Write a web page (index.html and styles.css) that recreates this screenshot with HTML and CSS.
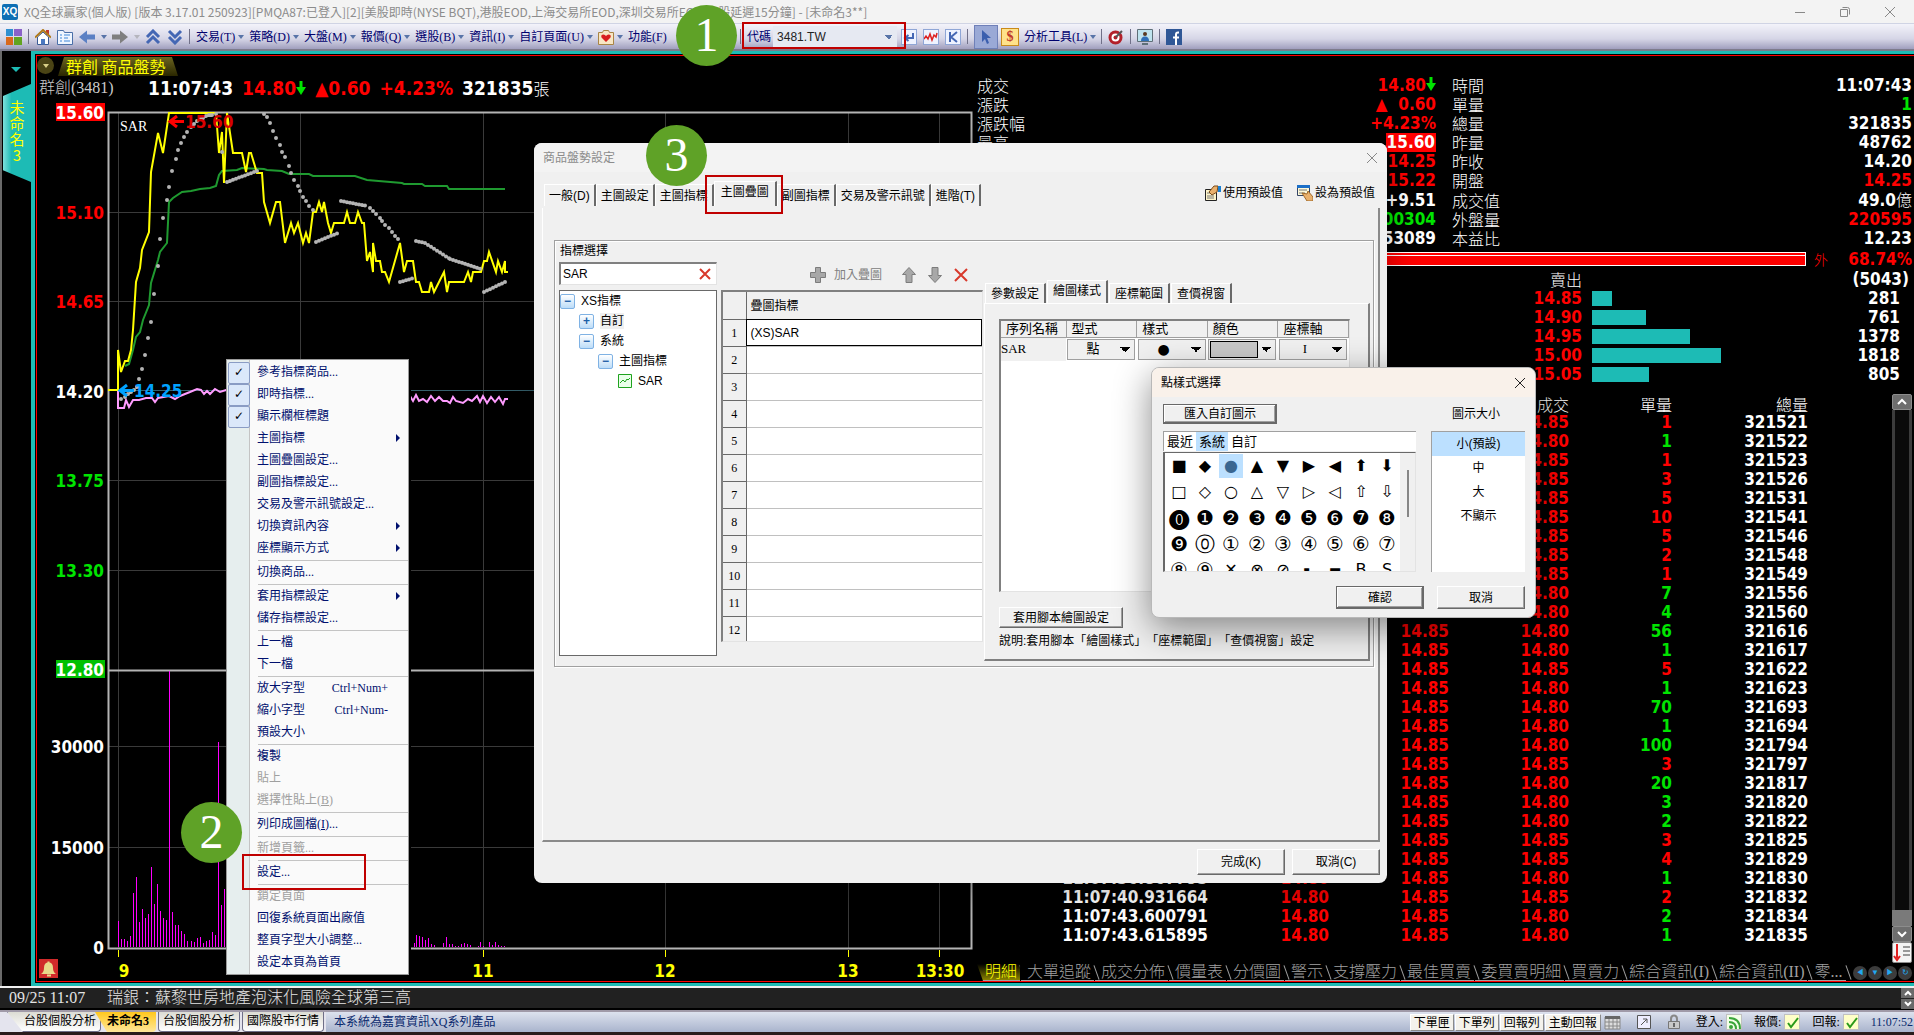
FILE: index.html
```
<!DOCTYPE html>
<html lang="zh-Hant">
<head>
    <meta charset="UTF-8">
    <meta name="viewport" content="width=device-width, initial-scale=1.0">
    <title>XQ全球贏家(個人版)</title>
    <link rel="stylesheet" href="styles.css">
</head>
<body>
<div class="app">

    <header class="titlebar">
        <span class="logo">XQ</span>
        <h1>XQ全球贏家(個人版) [版本 3.17.01 250923][PMQA87:已登入][2][美股即時(NYSE BQT),港股EOD,上海交易所EOD,深圳交易所EOD,日股延遲15分鐘] - [未命名3**]</h1>
        <div class="window-buttons">
            <button aria-label="最小化"><svg width="12" height="12"><path d="M1 6.500h10"/></svg></button>
            <button aria-label="還原"><svg width="12" height="12"><path d="M1.500 3.500h7v7h-7zM3.500 1.500h5q2 0 2 2v5"/></svg></button>
            <button aria-label="關閉"><svg width="12" height="12"><path d="M1 1l10 10M11 1L1 11"/></svg></button>
        </div>
    </header>

    <nav class="toolbar">
        <button class="tool" aria-label="版面"><svg width="16" height="16"><path fill="#2f8fd0" d="M0 0h7v7H0z"/><path fill="#8a62c8" d="M8 0h8v7H8z"/><path fill="#d9681d" d="M0 8h7v8H0z"/><path fill="#62a420" d="M8 8h8v8H8z"/></svg></button>
        <i class="sep"></i>
        <button class="tool" aria-label="首頁"><svg width="16" height="16"><path d="M11 1h3v5h-3z" fill="#c0392b"/><path d="M2.500 8L8 3l5.500 5v7.500h-11z" fill="#fff" stroke="#3a5a94"/><path d="M0 8.500L8 1l8 7.500" fill="none" stroke="#b07a1a" stroke-width="2"/><path d="M6 10h4v5.500H6z" fill="#4a78c0"/></svg></button>
        <button class="tool" aria-label="頁面"><svg width="16" height="16"><path d="M.5 1.500h6l1 2h8v12H.5z" fill="#eef5ff" stroke="#4a6fa8"/><path d="M3 6h2M3 9h2M3 12h2M7 6h6M7 9h4M7 12h6" stroke="#3f87d8"/></svg></button>
        <button class="tool" aria-label="上一頁"><svg width="16" height="16"><path d="M0 8l8-6.500v4h8v5H8v4z" fill="#5b80c4"/></svg></button>
        <i class="tri"></i>
        <button class="tool" aria-label="下一頁"><svg width="16" height="16"><path d="M16 8L8 1.500v4H0v5h8v4z" fill="#7f7f7f"/></svg></button>
        <i class="tri off"></i>
        <button class="tool" aria-label="往上"><svg width="16" height="16"><path d="M2 8l6-6 6 6M2 14l6-6 6 6" class="chev"/></svg></button>
        <button class="tool" aria-label="往下"><svg width="16" height="16"><path d="M2 2l6 6 6-6M2 8l6 6 6-6" class="chev"/></svg></button>
        <i class="sep"></i>
        <button class="menu">交易(T)<i class="tri"></i></button>
        <button class="menu">策略(D)<i class="tri"></i></button>
        <button class="menu">大盤(M)<i class="tri"></i></button>
        <button class="menu">報價(Q)<i class="tri"></i></button>
        <button class="menu">選股(B)<i class="tri"></i></button>
        <button class="menu">資訊(I)<i class="tri"></i></button>
        <button class="menu">自訂頁面(U)<i class="tri"></i></button>
        <button class="menu heart" aria-label="我的最愛"><svg width="16" height="16"><path d="M.5 3.500h4l1-2h5l1 2h4v12H.5z" fill="#f7e6c4" stroke="#a98545"/><path d="M8 13L3.500 8.500q-1-3 2-3Q7 5.500 8 7q1-1.500 2.500-1.500 3 0 2 3z" fill="#d81e1e"/></svg><i class="tri"></i></button>
        <button class="menu functions">功能(F)<i class="tri"></i></button>
        <i class="sep"></i>
        <label for="symbol">代碼</label>
        <select id="symbol"><option>3481.TW</option></select>
        <button class="tool boxed" aria-label="輸入"><svg width="16" height="16"><path d="M12 4v5H5M7.500 6L4 9l3.500 3" class="blue"/></svg></button>
        <button class="tool boxed" aria-label="走勢圖"><svg width="16" height="16"><path d="M1 10l2-3 2 3 2-5 2 6 2-5 2 2 1-4" fill="none" stroke="#d22" stroke-width="1.500"/></svg></button>
        <button class="tool boxed" aria-label="K線圖"><svg width="16" height="16"><path d="M5 3v10M12 3L6 8l6 5" class="blue"/></svg></button>
        <i class="sep"></i>
        <button class="tool pressed" aria-label="選取"><svg width="16" height="16"><path d="M4 1v12l3-3 2 5 2-1-2-5h4z" fill="#3b5fae"/></svg></button>
        <button class="tool dollar" aria-label="下單">$</button>
        <button class="menu">分析工具(L)<i class="tri"></i></button>
        <i class="sep"></i>
        <button class="tool" aria-label="目標"><svg width="16" height="16"><circle cx="7.500" cy="8.500" r="5.500" fill="#fff" stroke="#b3202a" stroke-width="3"/><circle cx="7.500" cy="8.500" r="2" fill="#b3202a"/><path d="M8 8l6-6" stroke="#555" stroke-width="2"/></svg></button>
        <i class="sep"></i>
        <button class="tool" aria-label="客服"><svg width="16" height="16"><path d="M.5.500h15v12H.5z" fill="#bfe3ee" stroke="#5f6f78"/><circle cx="8" cy="5" r="2" fill="#5b3a22"/><path d="M4 12q0-4.500 4-4.500t4 4.500z" fill="#2f6fb8"/><path d="M5 15h6" stroke="#5f6f78" stroke-width="2"/></svg></button>
        <i class="sep"></i>
        <button class="tool" aria-label="Facebook"><svg width="16" height="16"><path d="M0 0h16v16H0z" fill="#2f5796"/><path d="M13 3.500h-1q-2 0-2 2V16M7 8.500h6" fill="none" stroke="#fff" stroke-width="2"/></svg></button>
    </nav>

    <main class="workspace">
        <aside class="side">
            <i class="side-arrow"></i>
            <a class="side-tab" href="#">未命名3</a>
        </aside>

        <div class="frame">
        <section class="chart-panel">
            <div class="panel-tabs">
                <button class="round" aria-label="選單"><i class="tri gold"></i></button>
                <h2>群創 商品盤勢</h2>
            </div>
            <div class="summary">
                <span class="name">群創(3481)</span>
                <b>11:07:43</b>
                <b class="up last">14.80<svg width="10" height="14"><path d="M3.500 0h3v6H10L5 14 0 6h3.500z" fill="#00e400"/></svg></b>
                <b class="up">▲0.60</b>
                <b class="up">+4.23%</b>
                <b>321835<span class="cjk">張</span></b>
            </div>
            <svg class="chart" viewBox="37 100 937 881" preserveAspectRatio="xMinYMin meet">
                <path class="grid" d="M118.500 113V948M300.500 113V948M483.500 113V948M665.500 113V948M848.500 113V948M939.500 113V948M108 212.500H971M108 301.500H971M108 480.500H971M108 570.500H971M108 746.500H971M108 847.500H971"/>
                <path class="base" d="M108 390.500H971"/>
                <path class="outline" d="M108.500 112.500H971.500V948.500H108.500zM108 670.500H971"/>
                <path id="volume" class="volume"/>
                <path class="tick" d="M118.500 950v7M300.500 950v7M483.500 950v7M665.500 950v7M848.500 950v7M939.500 950v7"/>

                <polyline class="pink" points="118,390 118,408 124,408 126,400 129,407 133,400 139,400 146,398 152,398 155,402 158,398 169,396 175,399 180,396 190,392 197,389 201,390 204,394 207,391 210,394 215,389 220,392 226,390 300,395 408,400 410,396 413,401 416,395 419,401 423,399 427,402 431,396 435,401 439,397 443,401 447,401 450,403 453,397 456,401 463,403 468,399 472,401 477,396 480,402 483,396 487,403 491,397 495,402 499,397 503,404 505,399 508,399"/>
                <polyline class="average" points="125,366 129,364 133,350 136,337 140,332 143,320 149,305 151,283 158,260 160,252 167,243 169,202 173,198 182,192 191,191 200,189 210,188 216,186 219,175 222,171 237,170 242,168 264,169 267,170 282,171 289,174 309,174 313,176 355,176 367,180 402,183 404,184 422,184 425,186 447,186 449,189 505,189"/>
                <polyline class="price" points="108,390 118,390 118,350 121,372 125,361 128,361 131,350 133,330 136,282 140,268 142,250 149,232 151,172 158,133 163,153 169,113 216,113 219,153 222,132 224,183 227,113 233,153 242,153 246,172 249,153 251,153 257,173 262,173 264,202 270,223 276,202 280,202 285,243 291,223 294,233 298,223 303,243 306,233 309,243 313,212 316,212 319,202 322,212 324,202 328,223 331,233 334,223 344,223 347,212 350,223 355,223 358,212 362,223 364,223 367,261 370,252 373,272 373,243 376,261 380,261 382,272 385,272 389,282 400,243 404,272 407,261 413,261 416,282 419,282 422,292 429,292 431,282 434,292 444,272 447,292 449,282 464,282 468,272 471,282 473,272 481,272 484,261 487,261 489,252 496,272 498,261 502,272 505,261 505,272 508,272"/>
                <path id="sar" class="sar"/>

                <text class="indicator" x="120" y="131">SAR</text>
                <path class="arrow high" d="M184 121.500h-14M177 116l-7 5.500 7 5.500"/>
                <text class="high-text" x="185" y="128">15.60</text>
                <path class="arrow low" d="M134 390.500h-14M127 385l-7 5.500 7 5.500"/>
                <text class="low-text" x="134" y="397">14.25</text>

                <g class="axis">
                    <path d="M56 103h49v18H56z" fill="#f00"/>
                    <text x="104" y="119" class="w">15.60</text>
                    <text x="104" y="219" class="r">15.10</text>
                    <text x="104" y="308" class="r">14.65</text>
                    <text x="104" y="398" class="w">14.20</text>
                    <text x="104" y="487" class="g">13.75</text>
                    <text x="104" y="577" class="g">13.30</text>
                    <path d="M56 660h49v18H56z" fill="#00c000"/>
                    <text x="104" y="676" class="w">12.80</text>
                    <text x="104" y="753" class="w">30000</text>
                    <text x="104" y="854" class="w">15000</text>
                    <text x="104" y="954" class="w">0</text>
                </g>
                <g class="hours">
                    <text x="124" y="977">9</text>
                    <text x="300" y="977">10</text>
                    <text x="483" y="977">11</text>
                    <text x="665" y="977">12</text>
                    <text x="848" y="977">13</text>
                    <text x="940" y="977">13:30</text>
                </g>
                <path d="M39 959h19v19H39z" fill="#d02a2a"/>
                <path d="M41 974q3-2 3-6 0-5 3.500-5.500v-1h2v1q3.500.500 3.500 5.500 0 4 3 6zM47 974.500h4v2h-4z" fill="#e8d98a"/>
            </svg>
        </section>

        <section class="quote-panel">
            <table class="quote">
                <tr><th>成交</th><td class="up">14.80<svg width="10" height="14"><path d="M3.500 0h3v6H10L5 14 0 6h3.500z" fill="#00e400"/></svg></td><th>時間</th><td>11:07:43</td></tr>
                <tr><th>漲跌</th><td class="up">▲ &nbsp;0.60</td><th>單量</th><td class="down">1</td></tr>
                <tr><th>漲跌幅</th><td class="up">+4.23%</td><th>總量</th><td>321835</td></tr>
                <tr><th>最高</th><td><span class="limit">15.60</span></td><th>昨量</th><td>48762</td></tr>
                <tr><th>最低</th><td class="up">14.25</td><th>昨收</th><td>14.20</td></tr>
                <tr><th>均價</th><td class="up">15.22</td><th>開盤</th><td class="up">14.25</td></tr>
                <tr><th>溢折價</th><td>+9.51</td><th>成交值</th><td>49.0<span class="cjk">億</span></td></tr>
                <tr><th>內盤量</th><td class="down">100304</td><th>外盤量</th><td class="up">220595</td></tr>
                <tr><th>總筆數</th><td>53089</td><th>本益比</th><td>12.23</td></tr>
            </table>
            <div class="ratio"><div class="ratio-bar"></div><span class="cjk">外</span><b>68.74%</b></div>
            <table class="book">
                <tr><th>賣出</th><td></td><td class="total">(5043)</td></tr>
            </table>
            <div class="tape">
                <table class="ticks">
                    <colgroup><col class="c-time"><col class="c-bid"><col class="c-price"><col class="c-price"><col class="c-qty"><col class="c-total"><col></colgroup>
                    <thead><tr><th>時間</th><th>買進</th><th>賣出</th><th>成交</th><th>單量</th><th>總量</th><th></th></tr></thead>
                    <tbody></tbody>
                </table>
                <div class="scroll">
                    <button aria-label="往上捲"><svg width="12" height="8"><path d="M2 6l4-4 4 4"/></svg></button>
                    <div class="track"></div>
                    <div class="thumb"></div>
                    <button aria-label="往下捲"><svg width="12" height="8"><path d="M2 2l4 4 4-4"/></svg></button>
                    <button class="to-end" aria-label="最新"><svg width="20" height="20"><path d="M5 1v14M2 13l3 4 3-4" stroke="#e02020" stroke-width="2"/><path d="M11 4h7M11 8h7M11 12h7" stroke="#999"/></svg></button>
                </div>
            </div>
            <nav class="detail-tabs">
                <a class="active" href="#">明細</a><a href="#">大單追蹤</a><a href="#">成交分佈</a><a href="#">價量表</a><a href="#">分價圖</a><a href="#">警示</a><a href="#">支撐壓力</a><a href="#">最佳買賣</a><a href="#">委買賣明細</a><a href="#">買賣力</a><a href="#">綜合資訊(I)</a><a href="#">綜合資訊(II)</a><a href="#">零...</a>
                <span class="pager"><i>◀</i><i>▼</i><i>▶</i><i>↻</i></span>
            </nav>
        </section>
        </div>
    </main>

    <div class="news">
        <time>09/25 11:07</time>
        <span>瑞銀：蘇黎世房地產泡沫化風險全球第三高</span>
        <div class="news-scroll">
            <button aria-label="上一則"><svg width="10" height="8"><path d="M2 6l3-3 3 3"/></svg></button>
            <button aria-label="下一則"><svg width="10" height="8"><path d="M2 2l3 3 3-3"/></svg></button>
        </div>
    </div>

    <footer class="status">
        <nav class="page-tabs">
            <a class="first" href="#">台股個股分析</a><a class="active" href="#">未命名3</a><a href="#">台股個股分析</a><a href="#">國際股市行情</a>
        </nav>
        <span class="vendor">本系統為嘉實資訊XQ系列產品</span>
        <div class="status-buttons">
            <button>下單匣</button><button>下單列</button><button>回報列</button><button>主動回報</button>
        </div>
        <svg width="18" height="16"><path d="M1 3h15v12H1z" fill="#ddd" stroke="#888"/><path d="M1 2h15v3H1z" fill="#666"/><path d="M5 5v10M9 5v10M13 5v10M1 8h15M1 12h15" stroke="#888"/></svg>
        <svg width="16" height="16"><path d="M1.500 1.500h13v13h-13z" fill="#eef" stroke="#555"/><path d="M5 11l6-6M7 5h4v4" fill="none" stroke="#555"/></svg>
        <svg width="16" height="16"><path d="M5 8V5q0-3.500 3-3.500T11 5v3" fill="none" stroke="#888" stroke-width="2"/><path d="M2.500 7.500h11v7h-11z" fill="#c9c9c9" stroke="#777"/><path d="M8 9v4" stroke="#666" stroke-width="2"/></svg>
        <span class="state">登入:<svg class="cell" width="16" height="16"><circle cx="4" cy="12" r="2" fill="#3aa53a"/><path d="M2 7q7 0 7 7M2 3q11 0 11 11" fill="none" stroke="#3aa53a" stroke-width="2"/></svg></span>
        <span class="state">報價:<svg class="cell ok" width="16" height="16"><path d="M3 8l3 4 7-9"/></svg></span>
        <span class="state">回報:<svg class="cell ok" width="16" height="16"><path d="M3 8l3 4 7-9"/></svg></span>
        <time>11:07:52</time>
    </footer>

    <!-- right-click menu of the chart -->
    <ul class="context">
        <li class="checked">參考指標商品...</li>
        <li class="checked">即時指標...</li>
        <li class="checked">顯示欄框標題</li>
        <li class="more">主圖指標</li>
        <li>主圖疊圖設定...</li>
        <li>副圖指標設定...</li>
        <li>交易及警示訊號設定...</li>
        <li class="more">切換資訊內容</li>
        <li class="more">座標顯示方式</li>
        <li class="line"></li>
        <li>切換商品...</li>
        <li class="line"></li>
        <li class="more">套用指標設定</li>
        <li>儲存指標設定...</li>
        <li class="line"></li>
        <li>上一檔</li>
        <li>下一檔</li>
        <li class="line"></li>
        <li>放大字型<kbd>Ctrl+Num+</kbd></li>
        <li>縮小字型<kbd>Ctrl+Num-</kbd></li>
        <li>預設大小</li>
        <li class="line"></li>
        <li>複製</li>
        <li class="off">貼上</li>
        <li class="off">選擇性貼上(<u>B</u>)</li>
        <li class="line"></li>
        <li>列印成圖檔(<u>I</u>)...</li>
        <li class="line"></li>
        <li class="off">新增頁籤...</li>
        <li class="line"></li>
        <li>設定...</li>
        <li class="line"></li>
        <li class="off">鎖定頁面</li>
        <li>回復系統頁面出廠值</li>
        <li>整頁字型大小調整...</li>
        <li>設定本頁為首頁</li>
    </ul>

    <div class="dialog settings">
        <div class="dialog-title"><span>商品盤勢設定</span><button aria-label="關閉"><svg width="12" height="12"><path d="M1 1l10 10M11 1L1 11"/></svg></button></div>
        <div class="tabs-row">
            <div class="tabs">
                <button>一般(D)</button><button>主圖設定</button><button>主圖指標</button><button class="active">主圖疊圖</button><button>副圖指標</button><button>交易及警示訊號</button><button>進階(T)</button>
            </div>
            <div class="defaults">
                <button><svg width="16" height="16"><path d="M.5 4.500h11v11H.5z" fill="#fdf3c8" stroke="#222"/><path d="M2 8h7M2 11h7M2 13h7" stroke="#777"/><path d="M4 7l5-6h4l-1 6-5 3z" fill="#e9b06c" stroke="#7a4a18"/><path d="M13 1h3v6h-3z" fill="#1b7fd0"/></svg>使用預設值</button>
                <button><svg width="16" height="16"><path d="M.5.500h12v10H.5z" fill="#fdf8d8" stroke="#346"/><path d="M0 0h13v3H0z" fill="#1b6fc8"/><path d="M2 5h8M2 8h6" stroke="#777"/><path d="M5 8l5 1 1-3 5 6v4h-6z" fill="#e9b06c" stroke="#a06a2a"/></svg>設為預設值</button>
            </div>
        </div>
        <div class="pane">
            <div class="group">
                <div class="pick">
                    <label for="search">指標選擇</label>
                    <div class="search"><input id="search" type="text" value="SAR"><svg width="12" height="12"><path class="cross" d="M1 1l10 10M11 1L1 11"/></svg></div>
                    <ul class="tree">
                        <li><i class="node">−</i>XS指標</li>
                        <li class="l1"><i class="node">+</i><span class="soft">自訂</span></li>
                        <li class="l1"><i class="node">−</i>系統</li>
                        <li class="l2"><i class="node">−</i>主圖指標</li>
                        <li class="l3"><svg width="14" height="14"><path d="M.5.500h13v13H.5z" fill="#eaffea" stroke="#1fa31f"/><path d="M2 9l3-3 2 2 2-3 1 1 2-2" fill="none" stroke="#1fa31f"/></svg>SAR</li>
                    </ul>
                </div>
                <div class="overlay-list">
                    <div class="overlay-tools">
                        <button><svg width="16" height="16"><path d="M5.500.500h5v5h5v5h-5v5h-5v-5h-5v-5h5z" class="grey"/></svg>加入疊圖</button>
                        <button aria-label="上移"><svg width="14" height="16"><path d="M7 .500l6.500 7H10v8H4v-8H.5z" class="grey"/></svg></button>
                        <button aria-label="下移"><svg width="14" height="16"><path d="M7 15.500l6.500-7H10v-8H4v8H.5z" class="grey"/></svg></button>
                        <button aria-label="刪除"><svg width="14" height="14"><path class="cross" d="M1 1l12 12M13 1L1 13"/></svg></button>
                    </div>
                    <div class="sheet"><table>
                        <thead><tr><th></th><th class="head">疊圖指標</th></tr></thead>
                        <tbody></tbody>
                    </table></div>
                </div>
                <div class="style-panel">
                    <div class="tabs small">
                        <button>參數設定</button><button class="active">繪圖樣式</button><button>座標範圍</button><button>查價視窗</button>
                    </div>
                    <div class="style-pane">
                        <div class="series"><table>
                            <tr><th class="first">序列名稱</th><th>型式</th><th>樣式</th><th>顏色</th><th>座標軸</th></tr>
                            <tr>
                                <td class="soft">SAR</td>
                                <td><select aria-label="型式"><option>點</option></select></td>
                                <td><select class="dot" aria-label="樣式"><option>●</option></select></td>
                                <td><select class="color" aria-label="顏色"><option></option></select></td>
                                <td><select aria-label="座標軸"><option>I</option></select></td>
                            </tr>
                        </table></div>
                        <button class="btn apply">套用腳本繪圖設定</button>
                        <p>說明:套用腳本「繪圖樣式」「座標範圍」「查價視窗」設定</p>
                    </div>
                </div>
            </div>
        </div>
        <div class="actions"><button class="btn">完成(K)</button><button class="btn">取消(C)</button></div>
    </div>

    <div class="dialog picker">
        <div class="dialog-title"><span>點樣式選擇</span><button aria-label="關閉"><svg width="12" height="12"><path d="M1 1l10 10M11 1L1 11"/></svg></button></div>
        <div class="picker-body">
            <div class="picker-main">
                <button class="btn strong import">匯入自訂圖示</button>
                <div class="sets"><button>最近</button><button class="active">系統</button><button>自訂</button></div>
                <div class="symbols"><div class="symbol-grid"></div><div class="symbol-scroll"></div></div>
            </div>
            <div class="sizes">
                <span>圖示大小</span>
                <ul><li class="active">小(預設)</li><li>中</li><li>大</li><li>不顯示</li></ul>
            </div>
        </div>
        <div class="actions"><button class="btn strong">確認</button><button class="btn">取消</button></div>
    </div>

    <!-- numbered steps -->
    <div class="mark box1"></div><div class="step step1">1</div>
    <div class="mark box2"></div><div class="step step2">2</div>
    <div class="mark box3"></div><div class="step step3">3</div>
</div>

<script>
    // x position and top of each volume bar
    const volume = [
        [118,921],[121,939],[124,939],[127,941],[130,936],[133,893],[136,877],[139,922],[142,909],[145,918],[148,914],[151,867],
        [154,904],[157,884],[160,911],[163,918],[166,920],[169,671],[172,912],[175,925],[178,925],[181,931],[184,934],[187,941],
        [191,941],[194,942],[197,938],[200,937],[203,943],[206,941],[209,940],[212,932],[215,935],[218,742],[221,905],[224,889],
        [414,943],[416,935],[419,936],[422,937],[425,940],[428,938],[431,944],[434,945],[443,943],[446,937],[449,944],[452,944],
        [455,946],[458,946],[461,944],[464,943],[467,944],[470,945],[478,946],[480,942],[483,946],[489,942],[492,945],[495,942],
        [498,945],[501,946],[504,946]
    ];
    document.querySelector('#volume').setAttribute('d', volume.map(([x, y]) => `M${x + 0.5} 947V${y}`).join(''));

    const sar = [
        [121,399],[125,397],[128,394],[131,392],[134,390],[137,387],[139,379],[142,369],[145,355],[148,338],[151,322],[154,294],
        [158,266],[160,239],[163,218],[167,200],[169,187],[172,171],[176,159],[178,150],[181,143],[184,137],[187,132],[191,127],
        [194,124],[197,121],[200,119],[203,118],[206,116],[209,115],[212,115],[216,114],[222,152],[264,114],[267,117],[270,123],
        [273,131],[276,138],[280,145],[282,152],[285,157],[289,166],[291,173],[294,180],[298,186],[300,191],[303,197],[306,201],
        [309,206],[313,210],[370,208],[373,211],[376,214],[380,218],[382,221],[385,225],[389,228],[392,232],[395,236],[398,239]
    ];
    // stretches where the dots run in a straight line
    const runs = [[227,182,257,171],[316,242,338,233],[341,201,367,206],[400,282,414,278],[416,241,425,243],[425,243,450,259],[450,259,481,269],[484,292,505,282]];
    runs.forEach(([x1, y1, x2, y2]) => {
        for (let x = x1; x <= x2; x += 3) sar.push([x, y1 + (y2 - y1) * (x - x1) / (x2 - x1)]);
    });
    document.querySelector('#sar').setAttribute('d', sar.map(([x, y]) => `M${x} ${y}h0`).join(''));

    const asks = [['14.85', 281], ['14.90', 761], ['14.95', 1378], ['15.00', 1818], ['15.05', 805]];
    document.querySelector('.book').insertAdjacentHTML('beforeend', asks.map(([price, qty]) =>
        `<tr><td class="up">${price}</td><td><div class="depth" style="width:${Math.round(qty * 129 / 1818)}px"></div></td><td>${qty}</td></tr>`).join(''));

    const totals = [521,522,523,526,531,541,546,548,549,556,560,616,617,622,623,693,694,794,797,817,820,822,825,829,830,832,834,835];
    const qty = [1,-1,1,3,5,10,5,2,1,-7,-4,-56,-1,5,-1,-70,-1,-100,3,-20,-3,-2,3,4,-1,2,-2,-1];
    const times = {24: '11:07:36.867793', 25: '11:07:40.931664', 26: '11:07:43.600791', 27: '11:07:43.615895'};
    document.querySelector('.ticks tbody').innerHTML = totals.map((t, i) =>
        `<tr><td>${times[i] || ''}</td><td class="up">${times[i] ? '14.80' : ''}</td><td class="up">${i > 9 ? '14.85' : ''}</td>
        <td class="up">${qty[i] > 0 ? '14.85' : '14.80'}</td>
        <td class="${qty[i] > 0 ? 'up' : 'down'}">${Math.abs(qty[i])}</td><td>321${t}</td><td></td></tr>`).join('');

    let rows = '';
    for (let i = 1; i <= 12; i++) rows += `<tr><th>${i}</th><td>${i === 1 ? '(XS)SAR' : ''}</td></tr>`;
    document.querySelector('.sheet tbody').innerHTML = rows;

    const symbols = [...'■◆●▲▼▶◀⬆⬇□◇○△▽▷◁⇧⇩⓿❶❷❸❹❺❻❼❽❾⓪①②③④⑤⑥⑦⑧⑨✕⊗⊘╸━BS'];
    document.querySelector('.symbol-grid').innerHTML = symbols.map((s, i) =>
        `<button class="${i === 2 ? 'active' : i > 17 && i < 38 ? 'number' : ''}">${s}</button>`).join('');
</script>
</body>
</html>
```
FILE: styles.css
```
*{
    box-sizing: border-box;
    margin: 0;
    padding: 0;
}

body{
    background: #000000;
    font-family: "Liberation Sans", "Noto Sans CJK TC", sans-serif;
    font-size: 12px;
    line-height: 16px;
    color: #000000;
}

button, input, select{
    font: inherit;
    color: inherit;
    border: none;
    background: none;
}

select{
    appearance: none;
}

a{
    color: inherit;
    text-decoration: none;
}

ul{
    list-style: none;
}

i{
    font-style: normal;
}

svg{
    flex: none;
}

.app{
    position: relative;
    display: flex;
    flex-direction: column;
    height: 100vh;
    overflow: hidden;
}

.up{
    color: #ff0000;
}

.down{
    color: #00e400;
}

.cjk{
    font-family: "Noto Sans CJK TC", sans-serif;
    font-weight: 300;
    font-size: 16px;
}

.tri{
    flex: none;
    width: 0;
    height: 0;
    border: 3px solid transparent;
    border-top: 4px solid #5874a8;
    border-bottom: none;
}

.tri.off{
    border-top-color: #b5b5bd;
}

.tri.gold{
    border-top-color: #d8cf88;
}

/* title bar */
.titlebar{
    display: flex;
    align-items: center;
    flex: none;
    height: 23px;
    padding: 0 18px 0 2px;
    background: #f3f3f3;
}

.titlebar h1{
    flex: 1;
    padding-left: 6px;
    font-family: "Noto Sans CJK TC", sans-serif;
    font-size: 12px;
    font-weight: normal;
    color: #8c8c8c;
    white-space: nowrap;
}

.logo{
    width: 16px;
    height: 16px;
    border-radius: 2px;
    background: #0e6fb4;
    color: #ffffff;
    font-size: 10px;
    font-weight: bold;
    text-align: center;
}

.window-buttons{
    display: flex;
    gap: 33px;
}

.window-buttons svg, .dialog-title svg{
    display: block;
    fill: none;
    stroke: #888888;
}

/* toolbar */
.toolbar{
    display: flex;
    align-items: center;
    flex: none;
    height: 28px;
    padding: 0 6px;
    border-top: 1px solid #d0d4e4;
    border-bottom: 2px solid #7d7b8c;
    background: linear-gradient(#f3f3fa, #d5d5e6 60%, #a09fbe);
    font-family: "Liberation Serif", "Noto Sans CJK TC", serif;
    color: #00006e;
}

.toolbar svg{
    display: block;
}

.tool{
    margin-right: 6px;
}

.chev, .blue{
    fill: none;
    stroke: #4467b4;
    stroke-width: 3;
}

.blue{
    stroke-width: 2;
}

.sep{
    width: 1px;
    height: 15px;
    margin: 0 6px 0 0;
    background: #707088;
}

.toolbar > .tri{
    margin: 0 5px 0 0;
}

.menu{
    display: flex;
    align-items: center;
    gap: 3px;
    margin-right: 5px;
    white-space: nowrap;
}

.functions{
    width: 108px;
    margin-right: 4px;
    justify-content: space-between;
}

.toolbar label{
    padding-right: 2px;
}

#symbol{
    width: 124px;
    height: 21px;
    padding-left: 4px;
    margin-right: 4px;
    background: linear-gradient(to top left, transparent 50%, #5874a8 50%) right 4px center / 4px 4px no-repeat, linear-gradient(to top right, transparent 50%, #5874a8 50%) right 8px center / 4px 4px no-repeat, #e6e9f2;
    font-family: "Liberation Sans", sans-serif;
    color: #222222;
}

.boxed{
    background: #eef3ff;
    outline: 1px solid #8fa6d6;
    outline-offset: -1px;
}

.pressed{
    padding: 3px;
    margin-right: 4px;
    background: #9aa9d6;
    border: 1px solid #6f80b8;
}

.dollar{
    width: 16px;
    background: #ffe28a;
    outline: 1px solid #c98a1a;
    color: #c0392b;
    font-weight: bold;
    font-size: 14px;
}

/* workspace */
.workspace{
    display: flex;
    flex: 1;
    min-height: 0;
    background: #000000;
}

.side{
    width: 31px;
    flex: none;
    padding: 16px 0 0 3px;
    border-left: 2px solid #6a6a6a;
}

.side-arrow{
    display: block;
    width: 0;
    margin-left: 6px;
    border: 5px solid transparent;
    border-top: 5px solid #1dbbb5;
    border-bottom: none;
}

.side-tab{
    display: flex;
    width: 28px;
    height: 98px;
    margin: 12px 0 0 -2px;
    padding: 15px 6px 0;
    clip-path: polygon(0 12px, 100% 0, 100% 100%, 0 88%);
    background: linear-gradient(90deg, #7fe0dc, #1dbbb5 30%);
    font-family: "Noto Sans CJK TC", sans-serif;
    font-size: 15px;
    line-height: 16px;
    color: #ffff00;
    text-align: center;
    word-break: break-all;
}

.frame{
    display: grid;
    grid-template-columns: 937fr 940fr;
    flex: 1;
    min-width: 0;
    position: relative;
    padding: 2px 0 2px 2px;
    border: solid #1dbbb5;
    border-width: 3px 0 3px 4px;
}

/* thin red line inside the teal frame, open at the right */
.frame::before{
    content: "";
    position: absolute;
    inset: 1px 0 1px 1px;
    border: solid #ff0000;
    border-width: 1px 0 1px 1px;
    pointer-events: none;
}

.chart-panel{
    display: flex;
    flex-direction: column;
    min-width: 0;
    min-height: 0;
}

.panel-tabs{
    display: flex;
    height: 20px;
    gap: 4px;
    padding-top: 1px;
}

.round{
    display: flex;
    align-items: center;
    justify-content: center;
    width: 17px;
    height: 17px;
    border-radius: 50%;
    background: #4a4415;
}

.panel-tabs h2{
    width: 120px;
    padding-left: 8px;
    clip-path: polygon(6px 0, 114px 0, 100% 100%, 0 100%);
    background: linear-gradient(#6b6420, #2a2700);
    font-family: "Noto Sans CJK TC", sans-serif;
    font-size: 16px;
    font-weight: normal;
    line-height: 18px;
    color: #ffff00;
}

.summary{
    display: flex;
    align-items: center;
    height: 24px;
    gap: 9px;
    padding-left: 2px;
    font-family: "DejaVu Sans Condensed", "DejaVu Sans", sans-serif;
    font-size: 19px;
    line-height: 20px;
    color: #ffffff;
    white-space: nowrap;
}

.summary .name{
    width: 100px;
    font-family: "Liberation Serif", "Noto Sans CJK TC", serif;
    font-weight: 300;
    font-size: 16px;
    color: #cccccc;
}

.chart{
    display: block;
    width: 100%;
    flex: 1;
    min-height: 0;
    font-family: "DejaVu Sans Condensed", "DejaVu Sans", sans-serif;
    font-size: 17px;
    font-weight: bold;
}

.chart path, .chart polyline{
    stroke-width: 1;
}

.chart .grid{
    stroke: #3a3a3a;
}

.chart .base{
    stroke: #35606c;
}

.chart .outline{
    fill: none;
    stroke: #b4b4b4;
    stroke-width: 2;
}

.chart .volume{
    stroke: #ff00ff;
}

.chart .tick{
    stroke: #ffff00;
}

.chart polyline{
    fill: none;
    stroke-width: 2;
}

.price{
    stroke: #ffff00;
}

.average{
    stroke: #1f9a30;
}

.pink{
    stroke: #ff9cff;
}

.chart .sar{
    fill: none;
    stroke: #b4b4b4;
    stroke-width: 4;
    stroke-linecap: round;
}

.indicator{
    font-family: "Liberation Serif", serif;
    font-size: 14px;
    font-weight: normal;
    fill: #ffffff;
}

.chart .arrow{
    fill: none;
    stroke-width: 3;
}

.high{
    stroke: #ff0000;
}

.high-text{
    fill: #d80000;
}

.low{
    stroke: #00a2ff;
}

.low-text{
    fill: #00a2ff;
}

.axis{
    text-anchor: end;
}

.hours{
    text-anchor: middle;
    fill: #ffff00;
}

.w{
    fill: #ffffff;
}

.r{
    fill: #ff0000;
}

.g{
    fill: #00e400;
}

/* quote side */
.quote-panel{
    display: flex;
    flex-direction: column;
    min-width: 0;
    padding: 20px 2px 0 3px;
    font-family: "DejaVu Sans Condensed", "DejaVu Sans", sans-serif;
    font-size: 17px;
    font-weight: bold;
    line-height: 19px;
    color: #ffffff;
}

.quote-panel table{
    width: 100%;
    border-collapse: collapse;
    table-layout: fixed;
}

.quote-panel tr{
    height: 19px;
}

.quote-panel td{
    text-align: right;
    white-space: nowrap;
}

.quote-panel th{
    font-family: "Noto Sans CJK TC", sans-serif;
    font-size: 16px;
    font-weight: 300;
    text-align: left;
}

.quote th{
    width: 78px;
}

.quote th:nth-child(3){
    width: 95px;
    padding-left: 16px;
}

.quote td:nth-child(4){
    width: 381px;
}

.limit{
    display: inline-block;
    padding: 0 1px;
    background: #ff0000;
}

.ratio{
    display: flex;
    align-items: center;
    height: 22px;
    gap: 8px;
    color: #ff0000;
}

.ratio .cjk{
    font-size: 14px;
}

.ratio b{
    width: 76px;
    text-align: right;
}

.ratio-bar{
    flex: 1;
    height: 14px;
    border: 1px solid #ffffff;
    background: linear-gradient(#ff0000 2px, #ffffff 2px, #ffffff 3px, #ff0000 3px);
}

.book tr > :first-child{
    width: 605px;
    text-align: right;
}

.book td:nth-child(2){
    padding-left: 10px;
}

.book td:nth-child(3){
    width: 160px;
    padding-right: 12px;
}

.book td.total{
    padding-right: 3px;
}

.depth{
    height: 15px;
    background: #1dbbb5;
}

.tape{
    display: flex;
    flex: 1;
    align-items: stretch;
    margin-top: 10px;
}

.tape table{
    flex: 1;
    height: 551px;
}

.ticks th{
    text-align: right;
    line-height: 18px;
}

.c-time{
    width: 231px;
}

.c-bid{
    width: 121px;
}

.c-price{
    width: 120px;
}

.c-qty{
    width: 103px;
}

.c-total{
    width: 136px;
}

.scroll{
    display: flex;
    flex-direction: column;
    width: 20px;
    flex: none;
}

.scroll button{
    display: flex;
    align-items: center;
    justify-content: center;
    height: 16px;
    background: #6e6e6e;
    border: 1px solid #8c8c8c;
    border-radius: 2px;
}

.scroll svg, .news-scroll svg{
    fill: none;
    stroke: #ffffff;
    stroke-width: 2;
}

.track{
    flex: 1;
    background: linear-gradient(90deg, #3c3c3c 3px, #0a0a0a 3px, #0a0a0a 17px, #3c3c3c 17px);
}

.thumb{
    height: 16px;
    background: #7a7a7a;
}

.scroll .to-end{
    height: 21px;
    margin-bottom: 1px;
    background: #f4f4f4;
}

.detail-tabs{
    display: flex;
    flex: none;
    height: 17px;
    font-family: "Liberation Serif", "Noto Sans CJK TC", serif;
    font-size: 16px;
    font-weight: 300;
    line-height: 16px;
    color: #a0a0a0;
    white-space: nowrap;
    overflow: hidden;
}

.detail-tabs a{
    position: relative;
    margin-right: 1px;
    padding: 0 3px 0 6px;
    border-bottom: 1px solid #a0a0a0;
}

.detail-tabs a::after{
    content: "";
    position: absolute;
    right: -3px;
    bottom: 0;
    width: 1px;
    height: 15px;
    background: #a0a0a0;
    transform: rotate(-20deg);
}

.detail-tabs .active{
    padding-left: 8px;
    clip-path: polygon(0 0, 100% 0, 100% 100%, 6px 100%);
    background: linear-gradient(#000000, #8a8300);
    color: #ffff00;
}

.pager{
    display: flex;
    align-items: center;
    gap: 1px;
    margin-left: auto;
}

.pager i{
    width: 14px;
    height: 14px;
    border-radius: 50%;
    background: #3c3c3c;
    font-family: "DejaVu Sans", sans-serif;
    font-size: 8px;
    line-height: 14px;
    text-align: center;
    color: #22a8f0;
}

/* news ticker */
.news{
    display: flex;
    align-items: center;
    flex: none;
    height: 24px;
    padding-left: 9px;
    border-top: 2px solid #f0f0f0;
    border-bottom: 2px solid #000000;
    background: #212121;
    font-family: "Liberation Serif", "Noto Sans CJK TC", serif;
    font-weight: 300;
    font-size: 16px;
    color: #e4e4e4;
}

.news time{
    width: 98px;
}

.news-scroll{
    display: flex;
    flex-direction: column;
    gap: 1px;
    margin-left: auto;
}

.news-scroll button{
    width: 13px;
    height: 10px;
    background: #6a6a6a;
}

.news-scroll svg{
    display: block;
    margin: 0 auto;
}

/* status bar */
.status{
    display: flex;
    align-items: center;
    flex: none;
    height: 25px;
    border-top: 2px solid #a09aa8;
    border-bottom: 3px solid #2a1c1c;
    background: linear-gradient(#dde2ee, #a9b4cd);
    font-family: "Liberation Serif", "Noto Sans CJK TC", serif;
    white-space: nowrap;
}

.page-tabs{
    display: flex;
    height: 20px;
    padding-left: 7px;
    line-height: 18px;
    background: #e4e4ee;
}

.page-tabs a{
    padding: 0 4px;
    margin-right: 2px;
    background: linear-gradient(#dcdcd4, #ffffff);
    border: 1px solid #6f6f88;
    border-top: none;
    border-radius: 0 0 4px 4px;
}

.page-tabs .first{
    margin-right: -6px;
    padding: 0 4px 0 16px;
    clip-path: polygon(0 0, 100% 0, 100% 100%, 16px 100%);
}

.page-tabs .active{
    padding: 0 7px 0 12px;
    background: linear-gradient(#ffc81e, #ffe79a);
    clip-path: polygon(0 0, 100% 0, 100% 100%, 12px 100%);
    border: none;
    font-weight: bold;
}

.vendor{
    flex: 1;
    padding-left: 8px;
    color: #0b2a6e;
}

.status-buttons{
    display: flex;
    gap: 1px;
    margin-right: 3px;
}

.status-buttons button{
    height: 17px;
    padding: 0 3px;
    background: #f4f2ec;
    border: 1px solid #ffffff;
    border-right-color: #8a8a8a;
    border-bottom-color: #8a8a8a;
}

.status > svg{
    margin-right: 14px;
}

.state{
    display: flex;
    align-items: center;
    gap: 3px;
    margin-right: 12px;
}

.cell{
    background: #f4ffe8;
    border: 1px solid #c0c0c0;
}

.cell.ok{
    background: #ffffc8;
}

.ok path{
    fill: none;
    stroke: #2a9a1a;
    stroke-width: 2;
}

.status time{
    padding-right: 1px;
    color: #0b2a6e;
}

/* context menu */
.context{
    position: absolute;
    left: 226px;
    top: 359px;
    width: 183px;
    padding: 1px 0;
    border: 1px solid #9a9a9a;
    background: linear-gradient(90deg, #e6eeee 22px, #c4c4c4 22px, #c4c4c4 23px, #fafafa 23px);
    box-shadow: 2px 2px 0 #000000;
    font-family: "Liberation Serif", "Noto Sans CJK TC", serif;
    color: #00106e;
}

.context li{
    position: relative;
    display: flex;
    justify-content: space-between;
    height: 22px;
    padding: 0 20px 0 30px;
    line-height: 22px;
    white-space: pre;
}

.context .off{
    justify-content: flex-start;
    color: #a0a0a0;
}

.context li:has(u){
    justify-content: flex-start;
}

.context .line{
    height: 2px;
    margin-left: 31px;
    padding: 0;
    border-bottom: 1px solid #c4c4c4;
}

.context kbd{
    font: inherit;
}

.checked::before{
    content: "✓";
    position: absolute;
    left: 1px;
    top: 1px;
    width: 20px;
    height: 20px;
    border: 1px solid #8a9cc4;
    border-radius: 2px;
    background: #dbe8fa;
    font-family: "DejaVu Sans", sans-serif;
    font-weight: bold;
    line-height: 18px;
    text-align: center;
    color: #000000;
}

.more::after{
    content: "";
    position: absolute;
    right: 8px;
    top: 7px;
    border: 4px solid transparent;
    border-left-color: #00106e;
    border-right: none;
}

/* dialogs */
.dialog{
    position: absolute;
    display: flex;
    flex-direction: column;
    border-radius: 8px;
    background: #f0f0f0;
    overflow: hidden;
}

.settings{
    left: 534px;
    top: 143px;
    width: 853px;
    height: 740px;
    box-shadow: 0 8px 32px rgba(0, 0, 0, 0.3);
}

.dialog-title{
    display: flex;
    align-items: center;
    justify-content: space-between;
    flex: none;
    height: 29px;
    padding: 0 9px;
    background: #f3f3f3;
    color: #8c8c8c;
}

.btn{
    height: 26px;
    border: 1px solid #ffffff;
    border-right-color: #696969;
    border-bottom-color: #696969;
    box-shadow: inset -1px -1px 0 #a0a0a0;
    background: #f0f0f0;
    white-space: nowrap;
}

.btn.strong{
    border: 1px solid #696969;
    box-shadow: inset -1px -1px 0 #696969, inset 1px 1px 0 #ffffff, inset -2px -2px 0 #a0a0a0;
}

.tabs-row{
    display: flex;
    justify-content: space-between;
    padding: 10px 12px 0 10px;
}

.tabs{
    display: flex;
    align-items: flex-end;
    height: 26px;
}

.tabs button{
    height: 22px;
    margin-bottom: 2px;
    padding: 0 4px;
    border: solid;
    border-width: 1px 2px 0 1px;
    border-color: #ffffff #696969 #ffffff #ffffff;
    white-space: nowrap;
}

.tabs .active{
    height: 25px;
    padding: 0 6px 4px;
}

.defaults{
    display: flex;
    gap: 14px;
}

.defaults button{
    display: flex;
    align-items: center;
    gap: 2px;
    height: 21px;
}

.pane{
    flex: 1;
    margin: 0 7px 0 8px;
    padding: 32px 4px 0 11px;
    border: solid;
    border-width: 0 2px 2px 1px;
    border-color: #ffffff #8a8a8a #8a8a8a #ffffff;
}

.group{
    display: flex;
    height: 427px;
    padding: 0 3px 0 4px;
    border: 1px solid #a0a0a0;
    box-shadow: inset 1px 1px 0 #ffffff, 1px 1px 0 #ffffff;
}

.pick{
    display: flex;
    flex-direction: column;
    width: 158px;
    padding: 2px 0 10px;
}

.pick label{
    height: 19px;
    padding-left: 1px;
}

.search{
    display: flex;
    align-items: center;
    flex: none;
    height: 23px;
    padding-right: 5px;
    border: solid;
    border-width: 2px 1px 1px 2px;
    border-color: #808080 #e3e3e3 #e3e3e3 #808080;
    background: #ffffff;
}

.search input{
    flex: 1;
    min-width: 0;
    padding-left: 2px;
}

.cross{
    stroke: #d8392b;
    stroke-width: 2;
}

.tree{
    flex: 1;
    margin-top: 5px;
    border: 1px solid #696969;
    background: #ffffff;
}

.tree li{
    display: flex;
    align-items: center;
    height: 20px;
    gap: 6px;
}

.l1{
    padding-left: 19px;
}

.l2{
    padding-left: 38px;
}

.l3{
    padding-left: 58px;
}

.node{
    width: 15px;
    height: 15px;
    border: 1px solid #7fb2e4;
    border-radius: 2px;
    background: linear-gradient(#ffffff, #bcdcf8);
    color: #1c5fa8;
    font-weight: bold;
    line-height: 12px;
    text-align: center;
}

.soft{
    background: #f0f0f0;
}

.overlay-list{
    width: 262px;
    margin-left: 4px;
    padding-top: 22px;
}

.overlay-tools{
    display: flex;
    align-items: center;
    justify-content: flex-end;
    gap: 12px;
    height: 24px;
    padding-right: 15px;
    color: #808080;
}

.overlay-tools button{
    display: flex;
    align-items: center;
    gap: 8px;
}

.overlay-tools button:first-child{
    margin-right: 8px;
}

.grey{
    fill: #a8a8a8;
    stroke: #7c7c7c;
}

.sheet{
    height: 352px;
    margin-top: 3px;
    overflow: hidden;
    border: solid;
    border-width: 2px 1px 1px 2px;
    border-color: #808080 #e3e3e3 #e3e3e3 #808080;
    background: #ffffff;
}

.sheet table{
    width: 100%;
    border-collapse: collapse;
}

.sheet tr{
    height: 27px;
}

.sheet th{
    width: 23px;
    border: solid #696969;
    border-width: 0 1px 1px 0;
    background: #f0f0f0;
    font-family: "Liberation Serif", serif;
    font-weight: normal;
}

.sheet .head{
    width: auto;
    padding-left: 4px;
    border-right: none;
    font-family: "Noto Sans CJK TC", sans-serif;
    text-align: left;
}

.sheet td{
    padding-left: 4px;
    border-bottom: 1px solid #c0c0c0;
}

.sheet tbody tr:first-child td{
    outline: 1px solid #000000;
    outline-offset: -1px;
}

.style-panel{
    flex: 1;
    min-width: 0;
    padding-top: 38px;
    margin: 0 0 5px 1px;
    display: flex;
    flex-direction: column;
}

.tabs.small{
    height: 24px;
    padding-left: 1px;
    gap: 1px;
}

.tabs.small button{
    height: 20px;
    margin: 0;
    padding: 0 5px;
}

.tabs.small .active{
    height: 23px;
    padding: 0 5px 3px;
}

.style-pane{
    flex: 1;
    padding: 15px 18px 0 14px;
    border: solid;
    border-width: 1px 2px 2px 1px;
    border-color: #ffffff #808080 #808080 #ffffff;
}

.series{
    height: 273px;
    border: solid;
    border-width: 2px 1px 1px 2px;
    border-color: #808080 #e3e3e3 #e3e3e3 #808080;
    background: #ffffff;
    font-family: "Liberation Serif", "Noto Sans CJK TC", serif;
    font-size: 13px;
}

.series table{
    width: 100%;
    border-collapse: collapse;
    table-layout: fixed;
}

.series th{
    height: 16px;
    padding-left: 5px;
    border-right: 1px solid #a0a0a0;
    border-bottom: 1px solid #a0a0a0;
    background: #f0f0f0;
    font-weight: normal;
    line-height: 15px;
    text-align: left;
    white-space: nowrap;
}

.series .first{
    width: 65px;
}

.series td{
    height: 24px;
}

.series select{
    display: block;
    width: 68px;
    height: 21px;
    margin-left: 1px;
    padding-right: 16px;
    border: 1px solid #a0a0a0;
    background: linear-gradient(to top left, transparent 50%, #000000 50%) right 4px center / 5px 5px no-repeat, linear-gradient(to top right, transparent 50%, #000000 50%) right 9px center / 5px 5px no-repeat, #f0f0f0;
    text-align: center;
    text-align-last: center;
}

.series .dot{
    font-family: "DejaVu Sans", sans-serif;
    font-size: 14px;
    line-height: 18px;
}

.series .color{
    background: linear-gradient(to top left, transparent 50%, #000000 50%) right 4px center / 5px 5px no-repeat, linear-gradient(to top right, transparent 50%, #000000 50%) right 9px center / 5px 5px no-repeat, linear-gradient(#c8c8c8, #c8c8c8) 2px 2px / 46px 15px no-repeat, linear-gradient(#000000, #000000) 1px 1px / 48px 17px no-repeat, #f0f0f0;
}

.apply{
    width: 124px;
    height: 21px;
    margin-top: 15px;
}

.style-pane p{
    margin-top: 5px;
    white-space: nowrap;
    text-spacing-trim: space-all;
}

.actions{
    display: flex;
    justify-content: flex-end;
    gap: 7px;
    padding: 7px 7px 8px;
}

.actions .btn{
    width: 88px;
}

/* symbol picker */
.picker{
    left: 1151px;
    top: 367px;
    width: 385px;
    height: 251px;
    border: 1px solid #b8b8b8;
    box-shadow: 0 10px 36px rgba(0, 0, 0, 0.45);
}

.picker .dialog-title{
    background: #f9f1ea;
    color: #000000;
}

.picker .dialog-title svg{
    stroke: #222222;
}

.picker-body{
    display: flex;
    justify-content: space-between;
    padding: 7px 10px 0 11px;
}

.picker-main{
    width: 253px;
}

.import{
    display: block;
    width: 114px;
    height: 20px;
}

.sets{
    display: flex;
    height: 20px;
    margin-top: 7px;
    border-top: 1px solid #a0a0a0;
    border-left: 1px solid #a0a0a0;
    background: #ffffff;
    font-size: 13px;
}

.sets button{
    padding: 0 3px;
}

.sets .active, .sizes .active, .symbol-grid .active{
    background: #bce0ff;
}

.symbols{
    display: flex;
    height: 120px;
    margin-top: 1px;
    overflow: hidden;
    border: solid;
    border-width: 1px 1px 1px 2px;
    border-color: #696969 #e3e3e3 #e3e3e3 #696969;
}

.symbol-grid{
    display: grid;
    grid-template-columns: repeat(9, 24px);
    grid-auto-rows: 24px;
    gap: 2px;
    padding: 1px 0 0 2px;
    width: 235px;
    flex: none;
    background: #ffffff;
    font-family: "DejaVu Sans", sans-serif;
    font-size: 16px;
}

.symbol-grid button{
    line-height: 24px;
}

.symbol-grid .active{
    color: #3a6690;
}

.symbol-grid .number{
    font-size: 20px;
}

.symbol-scroll{
    width: 2px;
    height: 47px;
    margin: 17px 0 0 7px;
    background: #868686;
}

.sizes{
    width: 94px;
    text-align: center;
}

.sizes span{
    display: block;
    height: 27px;
    padding-right: 4px;
    line-height: 20px;
}

.sizes ul{
    height: 141px;
    border-top: 1px solid #a0a0a0;
    border-left: 1px solid #a0a0a0;
    background: #ffffff;
}

.sizes li{
    height: 24px;
    line-height: 24px;
}

.picker .actions{
    gap: 13px;
    padding: 14px 10px 8px;
}

.picker .actions .btn{
    height: 23px;
}

/* tutorial marks */
.mark{
    position: absolute;
    border: 2px solid #c00000;
}

.step{
    position: absolute;
    width: 61px;
    height: 61px;
    border-radius: 50%;
    background: #5fa227;
    font-family: "Liberation Serif", serif;
    font-size: 48px;
    line-height: 60px;
    text-align: center;
    color: #ffffff;
}

.box1{
    left: 742px;
    top: 22px;
    width: 164px;
    height: 27px;
}

.step1{
    left: 676px;
    top: 5px;
}

.box2{
    left: 242px;
    top: 854px;
    width: 124px;
    height: 36px;
}

.step2{
    left: 181px;
    top: 802px;
}

.box3{
    left: 705px;
    top: 175px;
    width: 78px;
    height: 39px;
}

.step3{
    left: 646px;
    top: 125px;
}
```
